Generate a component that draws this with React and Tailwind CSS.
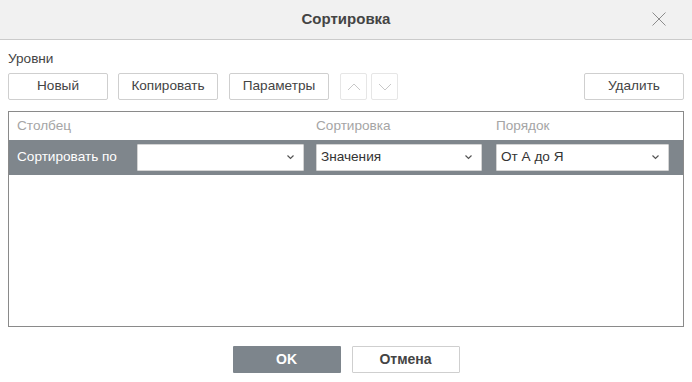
import React from "react";

const font = { fontFamily: '"Liberation Sans", Arial, sans-serif' };

function Chevron({ up = false, className = "" }) {
  return (
    <svg width="14" height="8" viewBox="0 0 14 8" className={className}>
      <polyline
        points={up ? "1,7 7,1 13,7" : "1,1 7,7 13,1"}
        fill="none"
        stroke="currentColor"
        strokeWidth="1"
      />
    </svg>
  );
}

function Select({ value, width }) {
  return (
    <div
      className={`${width} h-[27px] bg-white border border-[#d4d4d4] rounded-[1px] flex items-center justify-between pl-[4px] pr-[9px] text-[13.6px] text-[#333]`}
    >
      <span>{value}</span>
      <svg width="7" height="5" viewBox="0 0 7 5" className="text-[#555]">
        <polyline points="0.5,0.5 3.5,3.5 6.5,0.5" fill="none" stroke="currentColor" strokeWidth="1.2" />
      </svg>
    </div>
  );
}

function Btn({ children, className = "" }) {
  return (
    <button
      className={`h-[27px] w-[100px] border border-[#cfcfcf] rounded-[2px] bg-white text-[13.6px] text-[#444] flex items-center justify-center ${className}`}
    >
      {children}
    </button>
  );
}

export default function App() {
  return (
    <div className="w-[692px] h-[382px] bg-white flex flex-col overflow-hidden" style={font}>
      <div className="h-[40px] bg-[#f1f1f1] border-b border-[#cbcbcb] flex items-center justify-center relative shrink-0">
        <span className="text-[15px] font-bold text-[#444]">Сортировка</span>
        <svg width="14" height="14" viewBox="0 0 14 14" className="absolute right-[26px] top-[12px] text-[#8c8c8c]">
          <line x1="0.5" y1="0.5" x2="13.5" y2="13.5" stroke="currentColor" strokeWidth="1" />
          <line x1="13.5" y1="0.5" x2="0.5" y2="13.5" stroke="currentColor" strokeWidth="1" />
        </svg>
      </div>

      <div className="px-[8px] pt-[11px] flex flex-col">
        <div className="text-[13.6px] leading-[16px] text-[#444] h-[22px]">Уровни</div>
        <div className="flex items-center">
          <Btn>Новый</Btn>
          <Btn className="ml-[10px]">Копировать</Btn>
          <Btn className="ml-[11px]">Параметры</Btn>
          <button className="ml-[11px] h-[27px] w-[27px] border border-[#e6e6e6] rounded-[2px] flex items-center justify-center text-[#c8c8c8]">
            <Chevron up />
          </button>
          <button className="ml-[4px] h-[27px] w-[27px] border border-[#e6e6e6] rounded-[2px] flex items-center justify-center text-[#c8c8c8]">
            <Chevron />
          </button>
          <Btn className="ml-auto">Удалить</Btn>
        </div>

        <div className="mt-[11px] h-[216px] border border-[#8a8a8a] flex flex-col">
          <div className="h-[28px] flex items-center text-[13.6px] text-[#a5a5a5]">
            <span className="w-[307px] pl-[8px]">Столбец</span>
            <span className="w-[180px]">Сортировка</span>
            <span>Порядок</span>
          </div>
          <div className="h-[35px] bg-[#7f868c] flex items-center">
            <span className="w-[128px] pl-[8px] text-[13.6px] text-white">Сортировать по</span>
            <Select value="" width="w-[167px]" />
            <div className="w-[12px]" />
            <Select value="Значения" width="w-[166px]" />
            <div className="w-[14px]" />
            <Select value="От А до Я" width="w-[173px]" />
          </div>
        </div>

        <div className="mt-[19px] flex justify-center gap-[11px]">
          <button className="h-[27px] w-[108px] bg-[#7d858c] rounded-[1px] text-[14px] font-bold text-white">
            OK
          </button>
          <button className="h-[27px] w-[108px] bg-white border border-[#cfcfcf] rounded-[1px] text-[14px] font-bold text-[#444]">
            Отмена
          </button>
        </div>
      </div>
    </div>
  );
}
